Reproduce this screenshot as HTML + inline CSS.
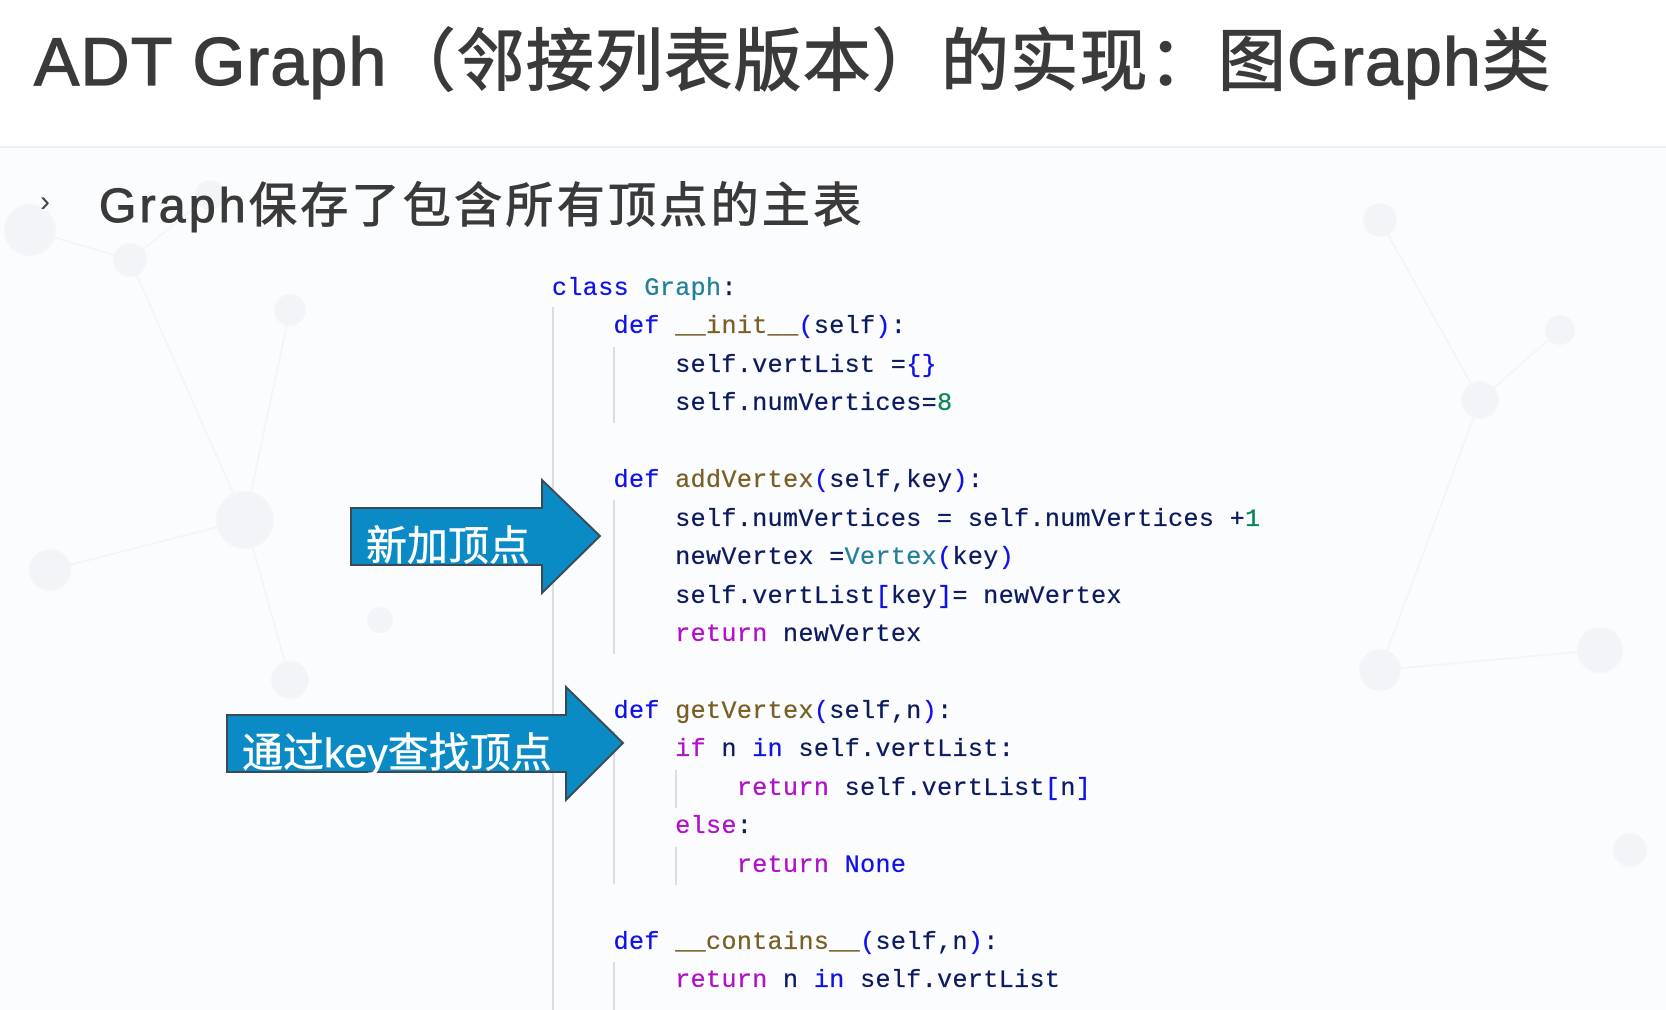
<!DOCTYPE html>
<html><head><meta charset="utf-8"><style>
html,body{margin:0;padding:0}
body{width:1666px;height:1010px;position:relative;overflow:hidden;background:#fbfcfd;font-family:"Liberation Sans","Noto Sans CJK SC",sans-serif}
.hdr{position:absolute;left:0;top:0;width:1666px;height:146px;background:#fff;border-bottom:2px solid #e8f0f3}
.title{position:absolute;left:34px;top:18px;font-size:68px;letter-spacing:1.2px;color:#3a3a3a;white-space:nowrap;line-height:88px;-webkit-text-stroke:1.3px #3a3a3a}
.bul{position:absolute;left:40px;top:185px;font-size:30px;color:#444}
.sub{position:absolute;left:99px;top:176px;font-size:48px;letter-spacing:3.3px;color:#3a3a3a;white-space:nowrap;line-height:62px;-webkit-text-stroke:1px #3a3a3a}
.code{position:absolute;left:552px;top:270px;font-family:"Liberation Mono",monospace;font-size:25px;letter-spacing:0.4px;line-height:38.45px;color:#0c1a5e;white-space:pre;-webkit-text-stroke:0.3px}
.k{color:#1010e8}.c{color:#267f99}.f{color:#795e26}.p{color:#b010c8}.n{color:#098658}.b{color:#1010e8}
.vl{position:absolute;width:2px;background:#ddd}
.lbl{position:absolute;color:#fff;font-size:41px;white-space:nowrap;font-family:"Liberation Sans","Noto Sans CJK SC",sans-serif;-webkit-text-stroke:0.5px #fff}
</style></head><body>
<svg style="position:absolute;left:0;top:150px" width="1666" height="860">
<g fill="#f1f5f7" stroke="#f3f6f8" stroke-width="2">
<line x1="30" y1="80" x2="130" y2="110"/><line x1="130" y1="110" x2="210" y2="45"/><line x1="130" y1="110" x2="245" y2="370"/><line x1="245" y1="370" x2="290" y2="160"/><line x1="245" y1="370" x2="50" y2="420"/><line x1="245" y1="370" x2="290" y2="530"/>
<line x1="1380" y1="70" x2="1480" y2="250"/><line x1="1480" y1="250" x2="1560" y2="180"/><line x1="1480" y1="250" x2="1380" y2="520"/><line x1="1380" y1="520" x2="1600" y2="500"/>
<circle cx="30" cy="80" r="25"/><circle cx="130" cy="110" r="16"/><circle cx="210" cy="45" r="14"/><circle cx="245" cy="370" r="28"/><circle cx="290" cy="160" r="15"/><circle cx="50" cy="420" r="20"/><circle cx="290" cy="530" r="18"/><circle cx="380" cy="470" r="12"/>
<circle cx="1380" cy="70" r="16"/><circle cx="1480" cy="250" r="18"/><circle cx="1560" cy="180" r="14"/><circle cx="1380" cy="520" r="20"/><circle cx="1600" cy="500" r="22"/><circle cx="1630" cy="700" r="16"/>
</g></svg>
<div class="hdr"></div>
<div class="title">ADT Graph（邻接列表版本）的实现：图Graph类</div>
<div class="bul">›</div>
<div class="sub">Graph保存了包含所有顶点的主表</div>

<div class="vl" style="left:552px;top:307px;height:703px"></div>
<div class="vl" style="left:613px;top:347px;height:76px"></div>
<div class="vl" style="left:613px;top:500px;height:154px"></div>
<div class="vl" style="left:613px;top:731px;height:153px"></div>
<div class="vl" style="left:613px;top:962px;height:48px"></div>
<div class="vl" style="left:675px;top:770px;height:38px"></div>
<div class="vl" style="left:675px;top:847px;height:38px"></div>

<div class="code"><span class="k">class</span> <span class="c">Graph</span>:
    <span class="k">def</span> <span class="f">__init__</span><span class="b">(</span>self<span class="b">)</span>:
        self.vertList =<span class="b">{}</span>
        self.numVertices=<span class="n">8</span>

    <span class="k">def</span> <span class="f">addVertex</span><span class="b">(</span>self,key<span class="b">)</span>:
        self.numVertices = self.numVertices +<span class="n">1</span>
        newVertex =<span class="c">Vertex</span><span class="b">(</span>key<span class="b">)</span>
        self.vertList<span class="b">[</span>key<span class="b">]</span>= newVertex
        <span class="p">return</span> newVertex

    <span class="k">def</span> <span class="f">getVertex</span><span class="b">(</span>self,n<span class="b">)</span>:
        <span class="p">if</span> n <span class="k">in</span> self.vertList:
            <span class="p">return</span> self.vertList<span class="b">[</span>n<span class="b">]</span>
        <span class="p">else</span>:
            <span class="p">return</span> <span class="k">None</span>

    <span class="k">def</span> <span class="f">__contains__</span><span class="b">(</span>self,n<span class="b">)</span>:
        <span class="p">return</span> n <span class="k">in</span> self.vertList</div>

<svg style="position:absolute;left:0;top:0" width="1666" height="1010">
<polygon points="351,508 542,508 542,480 600,536 542,593 542,565 351,565" fill="#0a8bc5" stroke="#3a4a55" stroke-width="2"/>
<polygon points="227,715 566,715 566,687 623,743 566,800 566,772 227,772" fill="#0a8bc5" stroke="#3a4a55" stroke-width="2"/>
</svg>
<div class="lbl" style="left:366px;top:512px">新加顶点</div>
<div class="lbl" style="left:242px;top:719px">通过key查找顶点</div>
</body></html>
